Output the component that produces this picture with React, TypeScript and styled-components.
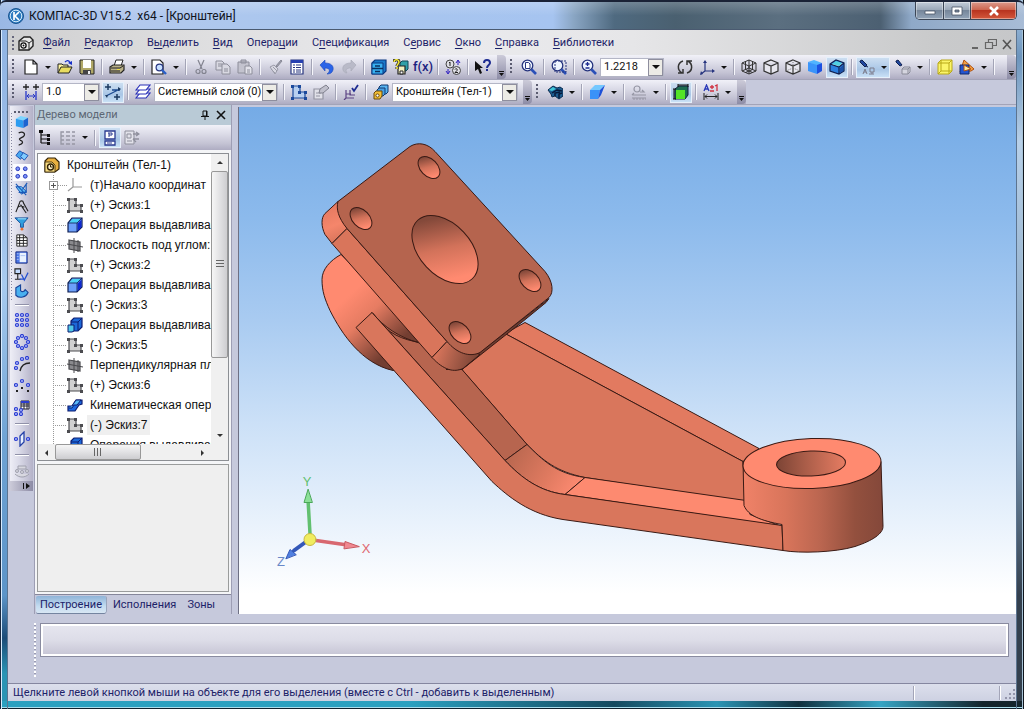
import React from "react";
import styled, { createGlobalStyle, css } from "styled-components";

const ui = `Roboto, "DejaVu Sans Condensed", "Liberation Sans", sans-serif`;
const treeFont = `"Liberation Sans", Arial, sans-serif`;
const navy = "#1c2268";
const base = "#c6c9dc";
const bar = "linear-gradient(#f1f1f8 0%, #dcdce8 35%, #c3c2d3 75%, #aeacc2 100%)";

const GlobalStyle = createGlobalStyle`
  * { box-sizing: border-box; }
  body { margin: 0; font-family: ${ui}; font-size: 11px; color: ${navy}; }
  button { font: inherit; color: inherit; border: 0; padding: 0; background: none; }
  ul { list-style: none; margin: 0; padding: 0; }
  svg { display: block; flex: none; }
`;

/* ---------- icons, all on a 16 by 16 grid ---------- */

const sketch = (c: string, f: string) => (
  <>
    <path d="M2 2h7v6h5v6H2Z" fill={f} stroke={c} strokeWidth="1.200" />
    <path d="M0 1h3v3H0ZM7 1h3v3H7ZM7 7h3v3H7ZM13 7h3v3h-3ZM0 13h3v3H0ZM13 13h3v3h-3Z" fill={c} />
  </>
);
const lens = (
  <>
    <circle cx="6.500" cy="6.500" r="5.300" fill="#eef5ff" stroke="#26347e" strokeWidth="1.300" />
    <path d="m10.500 10.500 4.500 4.500" stroke="#2a50b8" strokeWidth="2.600" />
  </>
);
const ring = (x: number, y: number) => (
  <circle key={`${x}-${y}`} cx={x} cy={y} r="1.500" fill="#b8c4ff" stroke="#2a3cd0" strokeWidth="1.200" />
);
const hexCube = "M8 1 15 4v8l-7 3-7-3V4ZM1 4l7 3 7-3M8 7v8";
const boxCube = "M1 5 7 1l8 3v8l-5 3-9-3ZM1 5l9 3 5-4M10 8v7";

const icons: Record<string, React.ReactNode> = {
  part: (
    <>
      <path d="M1 6 6 2h6l3 3v6l-4 4H1Z" fill="#e8e8e8" stroke="#222" strokeWidth="1.400" />
      <path d="M1 6h7l3 2v7M11 8l4-3" fill="none" stroke="#222" />
      <circle cx="5.500" cy="10.500" r="2.600" fill="#fff" stroke="#111" strokeWidth="1.300" />
      <circle cx="5.500" cy="10.500" r="1" fill="#111" />
    </>
  ),
  partGold: (
    <>
      <path d="M1 4 4 1h7l4 4v7l-4 3H1Z" fill="#e8b040" stroke="#332408" strokeWidth="1.200" />
      <path d="M1 5h7l3 3v7H1Z" fill="#f8dc80" stroke="#332408" strokeWidth=".800" />
      <circle cx="6.500" cy="10" r="3" fill="#fff3c8" stroke="#332408" strokeWidth="1.400" />
      <path d="M6.500 8v2h2" fill="none" stroke="#332408" />
    </>
  ),
  page: <path d="M2 1h8l4 4v10H2ZM10 1v4h4" fill="#fff" stroke="#222" strokeWidth="1.200" />,
  open: (
    <>
      <path d="M1 14V5h4l1 1h5v3" fill="#fff6a0" stroke="#222" />
      <path d="m1 14 3-6h11l-3 6Z" fill="#e8dc60" stroke="#222" />
      <path d="M8 3c2-2 4-2 5 1" fill="none" stroke="#1830c8" strokeWidth="1.300" />
      <path d="m11 4 4-2v4Z" fill="#1830c8" />
    </>
  ),
  save: (
    <>
      <path d="M1 1h14v14H2l-1-1Z" fill="#b0a868" stroke="#222" />
      <path d="M4 1h8v8H4Z" fill="#fff" />
      <path d="M4 11h8v4H4Z" fill="#444" />
      <path d="M9 12h2v3H9Z" fill="#eee" />
    </>
  ),
  print: (
    <>
      <path d="M5 7 7 1h7l-2 6Z" fill="#fff" stroke="#222" />
      <path d="m1 8 3-2h11v5l-3 3H1Z" fill="#b8b088" stroke="#222" strokeWidth="1.200" />
      <path d="M2 9h9l3-2M2 12h9" stroke="#222" fill="none" />
      <path d="M8 10h3v1H8Z" fill="#f0e040" />
    </>
  ),
  preview: (
    <>
      <path d="M1 1h8l3 3v11H1Z" fill="#fff" stroke="#222" strokeWidth="1.200" />
      <circle cx="8.500" cy="8.500" r="3.400" fill="#c8e0ff" stroke="#26347e" strokeWidth="1.200" />
      <path d="m11 11 4 4" stroke="#2a60c8" strokeWidth="2.400" />
    </>
  ),
  cut: (
    <g stroke="#82838f" strokeWidth="1.200" fill="none">
      <path d="m5 1 4 9M11 1 7 10" />
      <circle cx="5" cy="12.500" r="2" />
      <circle cx="11" cy="12.500" r="2" />
    </g>
  ),
  copy: (
    <g stroke="#8d8e9a" fill="#d9d9e2">
      <path d="M1 2h6l2 2v7H1ZM3 5h4M3 7h4" />
      <path d="M7 5h5l3 3v7H7ZM9 10h4M9 12h4" />
    </g>
  ),
  paste: (
    <g stroke="#8d8e9a" fill="#c3c3ce">
      <path d="M1 3h11v11H1ZM4 1h5v3H4Z" />
      <path d="M8 7h5l2 2v6H8ZM10 11h3M10 13h3" fill="#e2e2ea" />
    </g>
  ),
  brush: (
    <>
      <path d="m9 7 5-6 1 1-5 6Z" fill="#9c9dab" stroke="#8a8b98" />
      <path d="m3 8 4-2 4 4-3 5Z" fill="#d8d8e2" stroke="#9a9ba8" />
      <path d="m4 10 4 4M6 8l4 4" stroke="#9a9ba8" />
    </>
  ),
  props: (
    <>
      <path d="M2 1h12v14H2Z" fill="#fff" stroke="#26347e" strokeWidth="1.200" />
      <path d="M2 1h12v3H2Z" fill="#2640b0" />
      <path d="M4 6h2M4 8.500h2M4 11h2M4 13h2M7 6h5M7 8.500h5M7 11h5M7 13h5" stroke="#26347e" />
    </>
  ),
  undo: (
    <path d="M1 6 6 1v3c6 0 9 3 8 7-1 3-3 4-6 4 3-2 4-6-2-6v3Z" fill="#2a64e8" stroke="#1b48b8" strokeWidth=".600" />
  ),
  redo: (
    <path d="M15 6 10 1v3c-6 0-9 3-8 7 1 2 2 3 4 3-2-3-1-5 4-5v3Z" fill="#b9bac8" stroke="#a6a7b6" strokeWidth=".600" />
  ),
  cabinet: (
    <>
      <path d="m1 4 3-3h11v11l-3 3H1Z" fill="#1878c8" stroke="#0a3880" strokeWidth="1.200" />
      <path d="M1 4h11v11H1Z" fill="#38b0f0" stroke="#0a3880" />
      <path d="M1 9.500h11M4 7h5M4 12.500h5" stroke="#0a3060" strokeWidth="1.400" />
    </>
  ),
  variables: (
    <>
      <path d="m7 4 2-2h6v8l-2 2H7Z" fill="#30a0a8" stroke="#104858" />
      <path d="M5 7h7v8H5Z" fill="#f3f0c0" stroke="#222" strokeWidth="1.200" />
      <path d="M7 12h3v3H7Z" fill="#fff" stroke="#222" />
      <path d="M1 3c0-3 5-3 5 0 0 2-2 2-2 4M4 8v2" stroke="#222" strokeWidth="3" fill="none" />
      <path d="M1 3c0-3 5-3 5 0 0 2-2 2-2 4M4 8v2" stroke="#f4e838" strokeWidth="1.600" fill="none" />
    </>
  ),
  renumber: (
    <>
      <circle cx="5" cy="5" r="4" fill="#e0e0e6" stroke="#444" />
      <circle cx="11.500" cy="11.500" r="4" fill="#e0e0e6" stroke="#444" />
      <path d="m4 4 1-1v4M10 10.500c1-2 3 0 2 1l-2 2h3" stroke="#222" fill="none" />
      <path d="M13 6V2m-2 2 2-3 2 3M3 10v4m-2-2 2 3 2-3" stroke="#3020c0" fill="none" />
    </>
  ),
  help: (
    <>
      <path d="m0 2 8 7H5l2 5-2 1-2-5-3 2Z" fill="#111" />
      <path d="M9 4c0-4 6-4 6 0 0 2-3 2-3 5" stroke="#1c2a90" strokeWidth="2" fill="none" />
      <path d="M11 10h2v2h-2Z" fill="#1c2a90" />
    </>
  ),
  zoomPage: (
    <>
      {lens}
      <path d="M4.500 3.500h3l1.500 1.500v4.500H4.500Z" fill="#fff" stroke="#26347e" />
    </>
  ),
  zoomArea: (
    <>
      {lens}
      <path d="M4 2h11v11H4Z" fill="none" stroke="#26347e" strokeDasharray="2 1" />
    </>
  ),
  zoomStep: (
    <>
      {lens}
      <path d="M6.500 3v4M4.500 5h4M4.500 9h4" stroke="#1c2a90" strokeWidth="1.300" />
    </>
  ),
  rotate: (
    <g fill="none" stroke="#333" strokeWidth="1.500">
      <path d="M6 2C0 4 0 11 5 14M1 14h5v-4M10 14c6-2 6-9 1-12M15 2h-5v4" />
    </g>
  ),
  axes: (
    <>
      <path d="M6 12V3M6 12h8M6 12l-4 3" stroke="#26347e" strokeWidth="1.200" />
      <path d="m6 1 2 3H4ZM16 12l-3 2v-4ZM1 16l1-4 2 3Z" fill="#26347e" />
    </>
  ),
  wire: <path d={`${hexCube}M8 1v8l7 3M8 9l-7 3M4.500 2.500v8l7 3M11.500 2.500v8l-7 3`} fill="none" stroke="#333" />,
  hidden: <path d={hexCube} fill="#e6e6ee" stroke="#333" strokeWidth="1.200" />,
  thin: (
    <>
      <path d={hexCube} fill="#e6e6ee" stroke="#333" strokeWidth="1.200" />
      <path d="M8 1v8l7 3M8 9l-7 3" fill="none" stroke="#777" strokeDasharray="1 1" />
    </>
  ),
  shaded: (
    <>
      <path d="M1 3 7 1l8 3-5 3Z" fill="#50b4ff" />
      <path d="M1 3 10 6v9l-9-3Z" fill="#3a94fa" />
      <path d="m15 4-5 2v9l5-3Z" fill="#1c50e0" />
    </>
  ),
  shadedEdge: (
    <>
      <path d={boxCube} fill="#2c80e0" stroke="#102050" strokeWidth="1.200" />
      <path d="m3 5 4-3 6 2-3 3Z" fill="#50d0e0" />
      <path d="m11 9 3-3v6l-3 2Z" fill="#1c50a8" />
    </>
  ),
  camera: (
    <>
      <path d="m1 2 2-1 5 5-2 2-5-5Z" fill="#2048a0" stroke="#102050" />
      <path d="m7 7 2 1" stroke="#102050" />
      <path d="m4 15 2-5 2 5M5 13h2M11 9h4v4h-4ZM13 13v2M10 15h5" fill="none" stroke="#7c7d8c" />
    </>
  ),
  cameraBox: (
    <>
      <path d="m1 2 2-1 4 5-2 1-4-4Z" fill="#2048a0" stroke="#102050" />
      <path d="M7 10 9 8h6v5l-2 2H7ZM7 10h6v5M13 10l2-2" fill="#d5d5df" stroke="#8a8b98" />
    </>
  ),
  yellowCube: (
    <>
      <path d="m1 4 3-3h11v11l-3 3H1Z" fill="#fbf56a" stroke="#b8a818" />
      <path d="M1 4h11v11M12 4l3-3M4 1v11h11M4 12l-3 3" fill="none" stroke="#b8a818" />
    </>
  ),
  section: (
    <>
      <path d="M5 1 15 10 12 12 1 13Z" fill="#f4a040" stroke="#b05010" />
      <path d="M1 6h9v9H1Z" fill="#2454d0" stroke="#10286c" />
      <path d="M5 6 12 10l-7 2Z" fill="#fbe8a0" stroke="#b05010" />
    </>
  ),
  step: (
    <>
      <path d="M3 0v6M0 3h6M13 0v6M10 3h6" stroke="#222" strokeWidth="1.300" />
      <path d="M3 7v9M13 7v9" stroke="#2838c8" strokeWidth="1.300" />
      <path d="M4 12h8M6 10l-2 2 2 2M10 10l2 2-2 2" stroke="#2838c8" fill="none" />
    </>
  ),
  snap: (
    <>
      <path d="M3 0v6M0 3h6M12 10v6M9 13h6" stroke="#1c3a60" strokeWidth="1.500" />
      <path d="M1 12 15 5M7 6h8" stroke="#1c4a90" strokeWidth="1.300" />
      <path d="m0 11 3 0-1 3ZM13 3l3 2-3 2Z" fill="#1c3a60" />
    </>
  ),
  layers: (
    <g fill="#fff" stroke="#2a30b8" strokeWidth="1.200">
      <path d="m1 14 4-5h10l-4 5Z" />
      <path d="m1 10 4-5h10l-4 5Z" />
      <path d="m1 6 4-5h10l-4 5Z" />
    </g>
  ),
  sketchBlue: sketch("#1c4a9c", "#b8d0f0"),
  editGrey: (
    <>
      <path d="M1 5h9v10H1ZM3 9h5M3 12h4" fill="#e0e0e8" stroke="#9394a2" strokeWidth="1.200" />
      <path d="m6 9 1-4 6-4 3 3-6 5Z" fill="#c0c0cc" stroke="#80818e" />
    </>
  ),
  orient: (
    <>
      <path d="M3 6v8h8M3 14l-2 2M7 6v5h5M3 10h5" fill="none" stroke="#5c4484" strokeWidth="1.200" />
      <path d="M9 4l2 3 4-6" fill="none" stroke="#1c2a90" strokeWidth="1.800" />
    </>
  ),
  bodies: (
    <>
      <path d="M6 3 8 1h7v7l-2 2H6Z" fill="#58b4f0" stroke="#103870" />
      <path d="M4 6 6 4h6v6l-2 2H4Z" fill="#48a0e4" stroke="#103870" />
      <path d="M1 9 3 7h6v5l-2 3H1Z" fill="#f4c038" stroke="#6a4808" />
      <circle cx="4.500" cy="11.500" r="1.600" fill="#fff" stroke="#6a4808" />
    </>
  ),
  operation: (
    <>
      <path d="M1 6 6 2l4 2 3-1 3 2v7l-4 3-4-3-3 1-1-3Z" fill="#1c5c90" stroke="#0c2c50" />
      <path d="m2 6 4-3 3 2-4 2Z" fill="#40c8d8" />
      <path d="m5 9 5-3 5 1M8 12V9l5-1M12 14v-4l3-1" fill="none" stroke="#061838" strokeWidth="1.400" />
    </>
  ),
  surface: (
    <>
      <path d="M1 6 6 1h10l-5 5Z" fill="#74c8ff" />
      <path d="M1 6h10l-2 9H1Z" fill="#3a92f8" />
      <path d="m11 6 5-5-4 10-3 4Z" fill="#1c50d8" />
    </>
  ),
  check: (
    <g fill="none" stroke="#9596a4" strokeWidth="1.200">
      <circle cx="6" cy="5" r="3" />
      <path d="M9 8h4l-2-2M1 11h14M1 14h14M3 9l-2 2" />
      <path d="M2 15h13" strokeDasharray="2 1" />
    </g>
  ),
  simplify: (
    <>
      <path d="M2 5 6 2h9v9l-3 4H2Z" fill="#1c6c50" stroke="#101c40" />
      <path d="M3 6h9v9H3Z" fill="#54e428" />
      <path d="M5 1h10M1 5v10M5 0v3M15 0v3M0 5h3M0 15h3" stroke="#111" />
    </>
  ),
  dimension: (
    <>
      <path d="m1 7 2.500-6L6 7M2 5h3" fill="none" stroke="#2838b8" strokeWidth="1.300" />
      <path d="M7 3h4M9 1v4M7 7h4M12 2l2-1v6" fill="none" stroke="#d03040" strokeWidth="1.300" />
      <path d="M1 9v7M15 9v7M2 12.500h12M4 10.500l-2 2 2 2M12 10.500l2 2-2 2" fill="none" stroke="#222" />
    </>
  ),
  blueCube: (
    <>
      <path d="M2 5 7 2l8 2-5 3Z" fill="#7cd4ff" />
      <path d="m2 5 8 2v8l-8-2Z" fill="#2c9cf0" />
      <path d="m10 7 5-3v8l-5 3Z" fill="#1c64d0" />
    </>
  ),
  curve: <path d="M5 2c5-2 8 1 5 4-3 2-6 2-3 4 3 1 3 4-2 5" fill="none" stroke="#222" strokeWidth="1.300" />,
  planes: (
    <>
      <path d="m2 8 4-5 5 3-4 6Z" fill="#48a8f0" stroke="#1c50b0" />
      <path d="m7 9 3-4 5 3-4 5Z" fill="#80ccff" stroke="#1c50b0" />
    </>
  ),
  array: (
    <g fill="#7c94f8" stroke="#2030b8">
      <circle cx="4" cy="4" r="2" /><circle cx="12" cy="4" r="2" /><circle cx="4" cy="12" r="2" /><circle cx="12" cy="12" r="2" />
    </g>
  ),
  aux: (
    <>
      <path d="m2 5 6 0 5 5-5 3Z" fill="#60c0f8" stroke="#1c50b0" />
      <path d="m2 2 11 12M13 2v9H5M14 1l-5 7" fill="none" stroke="#1858b8" strokeWidth="1.200" />
    </>
  ),
  measure: <path d="M6 4a2 2 0 1 1 4 0l5 9M6 4 2 14M7 6l6 9M4 9c2-2 5-2 7 0" fill="none" stroke="#222" strokeWidth="1.200" />,
  filter: (
    <>
      <path d="M1 2h14l-5 6v4H7V8Z" fill="#30a0e0" stroke="#14509c" />
      <path d="M4 3h9" stroke="#b0e8ff" />
      <circle cx="8.500" cy="14" r="1.500" fill="#e87030" />
    </>
  ),
  spec: <path d="M3 2h7l4 3v9H3ZM3 5h11M3 8h11M3 11h11M6 2v12M10 2v12" fill="#fff" stroke="#222" />,
  report: (
    <>
      <path d="M2 2h12v12H2Z" fill="#4c78e8" stroke="#182c80" />
      <path d="M6 3h7v10H6Z" fill="#e8f2ff" />
      <path d="M7 6h5M3 4h2M3 7h2M3 10h2" stroke="#a8c0f4" />
    </>
  ),
  dims: (
    <>
      <path d="M1 2h6v5H1ZM4 7v6M1 13h6" fill="#c4dcff" stroke="#222" strokeWidth="1.200" />
      <path d="m8 8 3 6 4-8M6 13h4" fill="none" stroke="#2450d0" strokeWidth="1.300" />
    </>
  ),
  sheet: (
    <path d="m2 4 5-3v6c2 2 4 1 5-1l3 3c-2 5-9 7-13 3Z" fill="#48b0f0" stroke="#184498" strokeWidth="1.200" />
  ),
  grid9: <>{[3, 8, 13].flatMap((x) => [3, 8, 13].map((y) => ring(x, y)))}</>,
  circle8: <>{[[8, 2], [12, 4], [14, 8], [12, 12], [8, 14], [4, 12], [2, 8], [4, 4]].map(([x, y]) => ring(x, y))}</>,
  alongCurve: (
    <>
      {ring(2, 12)}{ring(3, 7)}{ring(8, 3)}{ring(13, 2)}
      <path d="M6 15c1-5 4-8 10-8" fill="none" stroke="#222" strokeWidth="1.400" />
    </>
  ),
  points: (
    <>
      {ring(8, 3)}{ring(2, 7)}{ring(14, 7)}
      <path d="M2 12h2v2H2ZM7 9h2v2H7ZM13 12h2v2h-2Z" fill="#222" />
    </>
  ),
  tableArray: (
    <>
      <path d="M7 1h8v8H7ZM7 4h8M7 6h8M10 1v8M13 1v8" fill="#fff" stroke="#223" />
      <path d="M7 1h8v2H7Z" fill="#2a3cd0" />
      {ring(2, 9)}{ring(7, 10)}{ring(2, 14)}{ring(7, 14)}
    </>
  ),
  mirror: (
    <>
      {ring(2, 8)}{ring(14, 8)}
      <path d="m6 5 4-4v10l-4 4Z" fill="#e8f0ff" stroke="#2440a8" strokeWidth="1.300" />
    </>
  ),
  arrayGrey: (
    <g fill="#d8d8e0" stroke="#a0a1ae">
      <circle cx="3" cy="9" r="1.500" /><circle cx="8" cy="10" r="1.500" /><circle cx="13" cy="9" r="1.500" />
      <path d="M1 12c4 4 10 4 14 0M4 4h8v3H4Z" />
    </g>
  ),
  treeIcon: (
    <>
      <path d="M3 1v12M3 5h6M3 9h6M3 13h6" fill="none" stroke="#111" strokeWidth="1.200" />
      <path d="M1 0h4v3H1ZM9 4h3v3H9ZM9 8h3v3H9ZM9 12h3v3H9Z" fill="#111" />
    </>
  ),
  structure: (
    <g fill="none" stroke="#9697a4" strokeWidth="1.300">
      <path d="M4 2H1v12h3M1 6h3M1 10h3" />
      <path d="M6 2h4M6 6h4M6 10h4M6 14h4M12 2h3M12 6h3M12 10h3M12 14h3" />
    </g>
  ),
  docs: (
    <>
      <path d="M3 1h10v8H3ZM3 11h10v4H3Z" fill="#fff" stroke="#2a3a90" strokeWidth="1.300" />
      <path d="M7 3v4M6 3h4v2H7M5 13h5" fill="none" stroke="#2a3a90" />
    </>
  ),
  relations: (
    <>
      <path d="M1 1h9v13H1ZM3 4h4v4H3ZM3 11h5" fill="#e2e2ea" stroke="#8e8f9c" />
      <path d="M9 4h6M12 2l3 2-3 2M9 9h6M12 12l-3-3" fill="none" stroke="#8e8f9c" strokeWidth="1.300" />
    </>
  ),
  origin: <path d="M6 1v9h9M6 10l-5 4" fill="none" stroke="#999" strokeWidth="1.200" />,
  sketchGrey: sketch("#4c4c50", "#d0d0d0"),
  extrude: (
    <>
      <path d="m5 1-4 5v9h9l5-5V1Z" fill="#6ca0fa" stroke="#0c1c50" strokeWidth="1.200" />
      <path d="M2 6 5.500 2H14l-4 4Z" fill="#48d0f4" />
      <path d="m10.500 6.500 4-4v7.500l-4 4.500Z" fill="#1028d0" />
      <path d="M1 6h9v9M10 6l5-5" fill="none" stroke="#0c1c50" strokeWidth=".800" />
    </>
  ),
  extrudeB: (
    <>
      <path d="m4 4 3-3h8v9l-4 4H4Z" fill="#1c68d8" stroke="#0c1c70" strokeWidth="1.200" />
      <path d="M4 5h7v8M11 5l4-4" fill="none" stroke="#0c1c70" />
      <path d="M1 8h6v6l-2 1H1Z" fill="#50c8e8" stroke="#0c1c70" />
    </>
  ),
  plane: (
    <>
      <path d="m2 3 11 2v9L2 12Z" fill="#8a8a8e" stroke="#48484c" strokeWidth="1.200" />
      <path d="M7 1v15M0 7l16 3M11 3v12" stroke="#48484c" />
    </>
  ),
  sweep: (
    <>
      <path d="M1 9h4l4-6h6v4l-3 1-4 6H1Z" fill="#1c68e0" stroke="#0c1c70" strokeWidth="1.200" />
      <path d="m5 9 4-6h5l-4 5H7l-2 3H2" fill="#58b8f8" stroke="#0c1c70" />
    </>
  ),
};

const Icon = ({ name }: { name: string }) => (
  <svg width="16" height="16" viewBox="0 0 16 16" aria-hidden="true">{icons[name]}</svg>
);

/* ---------- window frame ---------- */

const Frame = styled.div`
  height: 100vh;
  min-height: 560px;
  display: flex;
  flex-direction: column;
  padding: 0 8px 8px;
  overflow: hidden;
  background:
    linear-gradient(90deg, #1b2a40 0 1px, #d9ecff 1px 2px, transparent 2px 7px, #5c7490 7px) left / 8px 100% no-repeat,
    linear-gradient(90deg, #5c7490 0 1px, transparent 1px 6px, #a8c4d8 6px 7px, #10151c 7px) right / 8px 100% no-repeat,
    linear-gradient(transparent 6px, #a8dcec 6px 7px, #10202c 7px) bottom / 100% 8px no-repeat,
    linear-gradient(90deg, #2aa0c0 0 40%, #154a60 60%, #2a94b4 70%, #10303e 78%, #36a4c4 86%, #14242c 96%) bottom / 100% 8px no-repeat,
    linear-gradient(#8db2e2 0, #9fc0ea 30%, #a8cbf0 40%, #6fa3d4 62%, #5c94c8 84%, #1c4c78 90%, #2a94b4 95%) left / 8px 100% no-repeat,
    linear-gradient(#b0cbe8 0, #6c94bc 8%, #b8d0e8 20%, #7c9cba 60%, #34404e 84%) right / 8px 100% no-repeat;
`;

const TitleBar = styled.header`
  display: flex;
  align-items: center;
  height: 30px;
  flex: none;
  margin: 0 -8px;
  padding: 0 8px;
  border-top: 2px solid #1a2236;
  border-bottom: 1px solid #4a5a70;
  border-radius: 6px 6px 0 0;
  background:
    linear-gradient(rgba(255, 255, 255, 0.2), transparent 50%),
    linear-gradient(90deg, #9ab8e4 0, #b3c9ee 12%, #a9c6ee 30%, #a6c4f0 54%, #8aa6c4 56%, #4f6a80 60%, #4a6070 66%, #5b6f80 76%, #4c6072 86%, #8fa9c8 89%, #a8bcd6 100%);
`;

const Title = styled.h1`
  flex: 1;
  margin: 0 0 0 5px;
  font: 400 12px/16px ${ui};
  color: #10141c;
  white-space: pre;
`;

const CaptionButtons = styled.div`
  display: flex;
  align-self: flex-start;
  border: 1px solid #3c4656;
  border-top: 0;
  border-radius: 0 0 5px 5px;
  overflow: hidden;
  margin-right: -1px;
`;

const CaptionButton = styled.button<{ $close?: boolean }>`
  display: flex;
  align-items: center;
  justify-content: center;
  width: ${(p) => (p.$close ? 46 : 27)}px;
  height: 17px;
  box-shadow: inset 0 0 0 1px rgba(255, 255, 255, 0.4);
  background: ${(p) =>
    p.$close
      ? "linear-gradient(#dc9a8c 0, #cc6650 45%, #b83420 50%, #d4583c 100%)"
      : "linear-gradient(#c3ccd8 0, #9ba8b8 45%, #76869a 50%, #93a4b8 100%)"};
  & + & { border-left: 1px solid #3c4656; }
`;

const MenuBar = styled.nav`
  display: flex;
  align-items: center;
  height: 25px;
  flex: none;
  padding: 0 3px 0 4px;
  background: linear-gradient(90deg, #cfcfd0 0, #dcdcdd 15%, #ebebee 42%, #e6e6e8 62%, #c9cacb 92%, #c6c7c9 100%);
`;

const MenuList = styled.div`
  display: flex;
  gap: 14px;
  margin-left: 9px;
`;

const MenuItem = styled.button`
  line-height: 16px;
  white-space: nowrap;
  u { text-underline-offset: 2px; }
`;

const DocButtons = styled.div`
  display: flex;
  gap: 3px;
  margin-left: auto;
  padding-top: 4px;
  button { width: 13px; height: 13px; }
`;

/* ---------- tool bars ---------- */

const ToolRow = styled.div`
  display: flex;
  height: 25px;
  flex: none;
  background: ${base};
  border-bottom: 1px solid #a3a4b8;
`;

const ToolBar = styled.div<{ $grow?: boolean }>`
  display: flex;
  align-items: center;
  flex: ${(p) => (p.$grow ? "1 1 auto" : "none")};
  background: ${bar};
`;

const Grip = styled.span<{ $row?: boolean }>`
  flex: none;
  width: ${(p) => (p.$row ? "16px" : "12px")};
  height: ${(p) => (p.$row ? "2px" : "16px")};
  background: ${(p) =>
    p.$row
      ? "repeating-linear-gradient(90deg, #5b5c70 0 2px, transparent 2px 4px)"
      : "repeating-linear-gradient(#5b5c70 0 2px, transparent 2px 4px) 4px 0 / 2px 100% no-repeat"};
`;

const litBox = css`
  background: linear-gradient(#cfe0f2, #a9c6e6 60%, #cde4f8);
  box-shadow: inset 0 0 0 1px #e6f0fa;
`;

const Tool = styled.button<{ $on?: boolean }>`
  display: flex;
  align-items: center;
  justify-content: center;
  flex: none;
  width: 22px;
  height: 21px;
  ${(p) => p.$on && litBox}
`;

const Lit = styled.span`
  display: flex;
  align-items: center;
  height: 21px;
  margin-right: 2px;
  ${litBox}
`;

const CaretButton = styled.button`
  display: flex;
  align-items: center;
  justify-content: center;
  flex: none;
  width: 12px;
  height: 21px;
  &::after {
    content: "";
    border: 3px solid transparent;
    border-top-color: #111;
    border-bottom: 0;
  }
`;

const Rule = styled.span`
  flex: none;
  width: 8px;
  height: 16px;
  background: linear-gradient(90deg, #a3a4b6 0 1px, #f6f6fb 1px 2px) 3px 0 / 2px 100% no-repeat;
`;

const Gap = styled.span`
  flex: none;
  width: 8px;
`;

const Overflow = styled.button<{ $end?: boolean }>`
  display: flex;
  align-items: flex-end;
  justify-content: center;
  flex: none;
  align-self: stretch;
  width: 9px;
  margin-left: ${(p) => (p.$end ? "auto" : "3px")};
  padding-bottom: 3px;
  border-radius: 0 4px 4px 0;
  background: linear-gradient(#cccbd9, #8d8ca6);
`;

const OverflowMark = () => (
  <svg width="5" height="5" viewBox="0 0 5 5" aria-hidden="true">
    <path d="M0 0h5v1H0ZM0 2h5L2.500 5Z" fill="#111" />
  </svg>
);

const FxLabel = styled.span`
  font: 500 13px/14px ${ui};
  color: #1c2280;
`;

const ComboShell = styled.span<{ $w: number }>`
  display: flex;
  flex: none;
  width: ${(p) => p.$w}px;
  height: 19px;
  margin-right: 2px;
  border: 1px solid #b4b6c6;
  background: #fff;
  select {
    flex: 1;
    min-width: 0;
    appearance: none;
    border: 0;
    padding: 0 0 0 3px;
    background: #fff;
    color: #111;
    font: 11px/16px ${ui};
  }
`;

const ArrowBox = styled.span`
  display: flex;
  align-items: center;
  justify-content: center;
  width: 15px;
  border: 1px solid #8e8e9e;
  background: #ecebe6;
  pointer-events: none;
  &::after {
    content: "";
    border: 4px solid transparent;
    border-top-color: #111;
    border-bottom: 0;
  }
`;

const Combo = ({ label, value, width }: { label: string; value: string; width: number }) => (
  <ComboShell $w={width}>
    <select aria-label={label}><option>{value}</option></select>
    <ArrowBox />
  </ComboShell>
);

type Entry = string | [string, string];
/* "|" is a rule, "v" a drop-down arrow, "name*" a pressed button */
const Tools = ({ items }: { items: Entry[] }) => (
  <>
    {items.map((item, i) => {
      if (item === "|") return <Rule key={i} />;
      if (item === "v") return <CaretButton key={i} aria-label="Другие варианты" />;
      const [name, label] = item as [string, string];
      const on = name.endsWith("*");
      return (
        <Tool key={i} $on={on} aria-label={label} aria-pressed={on || undefined}>
          {name === "fx" ? <FxLabel>f(x)</FxLabel> : <Icon name={name.replace("*", "")} />}
        </Tool>
      );
    })}
  </>
);

/* ---------- workspace ---------- */

const Workspace = styled.main`
  display: grid;
  grid-template-columns: 26px 198px minmax(0, 1fr);
  flex: 1;
  min-height: 0;
  background: ${base};
`;

const SideBar = styled.div`
  display: flex;
  flex-direction: column;
  align-items: center;
  align-self: start;
  margin: 1px 1px 0 2px;
  padding-top: 5px;
  background: linear-gradient(90deg, #eeeef6 0, #dadae8 40%, #b4b2c8 100%);
  border-radius: 0 0 4px 4px;
`;

const SideTool = styled.button<{ $tall?: boolean; $on?: boolean }>`
  display: flex;
  align-items: center;
  justify-content: center;
  width: 18px;
  height: ${(p) => (p.$tall ? 22 : 17)}px;
  background: ${(p) => (p.$on ? "#fbfcff" : "none")};
  svg { width: ${(p) => (p.$tall ? 16 : 15)}px; height: ${(p) => (p.$tall ? 16 : 15)}px; }
`;

const SideSet = styled.div<{ $dots?: boolean }>`
  align-self: stretch;
  display: flex;
  flex-direction: column;
  align-items: center;
  background: ${(p) =>
    p.$dots ? "repeating-linear-gradient(#8485a0 0 1px, transparent 1px 3px) 1px 0 / 1px 100% no-repeat" : "none"};
`;

const SideRule = styled.span`
  width: 14px;
  height: 9px;
  background: linear-gradient(#9091a8 0 1px, #fff 1px 2px) 0 4px / 100% 2px no-repeat;
`;

const SideMore = styled.button`
  align-self: stretch;
  height: 10px;
  padding-right: 3px;
  display: flex;
  align-items: center;
  justify-content: flex-end;
  background: linear-gradient(90deg, #cccbd9, #8d8ca6);
`;

const Panel = styled.section`
  display: flex;
  flex-direction: column;
  min-height: 0;
  border-left: 1px solid #9d9eb4;
  border-right: 1px solid #9d9eb4;
`;

const PanelHead = styled.header`
  display: flex;
  align-items: center;
  height: 20px;
  flex: none;
  padding: 0 2px;
  background: #b9cad6;
  color: #5c6674;
  h2 { flex: 1; margin: 0; font: 400 11px/16px ${ui}; }
  button { width: 16px; height: 14px; display: flex; align-items: center; justify-content: center; }
`;

const PanelTools = styled.div`
  display: flex;
  align-items: center;
  height: 25px;
  flex: none;
  background: ${bar};
`;

const PanelBody = styled.div`
  display: flex;
  flex-direction: column;
  gap: 3px;
  flex: 1;
  min-height: 0;
  padding: 3px 2px 2px;
  background: #f4f5f7;
  border-bottom: 1px solid #85869a;
`;

const TreeBox = styled.div`
  display: grid;
  grid-template: minmax(0, 1fr) 16px / minmax(0, 1fr) 17px;
  flex: 17;
  min-height: 0;
  border: 1px solid #8c8f94;
  background: #fff;
`;

const LowerBox = styled.div`
  flex: 7;
  min-height: 0;
  border: 1px solid #9a9c9c;
  background: #efefef;
`;

const Tree = styled.ul`
  && { padding: 1px 0 0 6px; }
  overflow: hidden;
  font: 12px/20px ${treeFont};
  color: #111;
  white-space: nowrap;
`;

const RootRow = styled.li`
  display: flex;
  align-items: center;
  gap: 7px;
  height: 20px;
`;

const Branch = styled.li<{ $selected?: boolean; $expandable?: boolean }>`
  display: flex;
  align-items: center;
  height: 20px;
  margin-left: 9px;
  background: repeating-linear-gradient(#999 0 1px, transparent 1px 2px) left / 1px 100% no-repeat;
  &::before {
    content: "";
    flex: none;
    width: ${(p) => (p.$expandable ? 9 : 14)}px;
    height: 1px;
    background: repeating-linear-gradient(90deg, #999 0 1px, transparent 1px 2px);
  }
  span {
    margin-left: 4px;
    padding: 0 3px;
    background: ${(p) => (p.$selected ? "#efefef" : "none")};
  }
`;

const Expander = styled.button`
  && {
    order: -1;
    flex: none;
    width: 9px;
    height: 9px;
    margin-left: -4px;
    border: 1px solid #999;
    background:
      linear-gradient(#555, #555) center / 5px 1px no-repeat,
      linear-gradient(#555, #555) center / 1px 5px no-repeat,
      #fff;
  }
`;

const ScrollV = styled.div`
  display: flex;
  flex-direction: column;
  align-items: stretch;
  background: #f0f0f0;
`;

const ScrollH = styled.div`
  grid-column: 1 / 3;
  display: flex;
  background: #f0f0f0;
  padding-right: 17px;
`;

const ScrollArrow = styled.button<{ $dir: "up" | "down" | "left" | "right" }>`
  display: flex;
  align-items: center;
  justify-content: center;
  flex: none;
  width: 17px;
  height: 17px;
  &::after {
    content: "";
    border: 3px solid transparent;
    ${(p) => p.$dir === "up" && "border-bottom-color: #333; border-top: 0;"}
    ${(p) => p.$dir === "down" && "border-top-color: #333; border-bottom: 0;"}
    ${(p) => p.$dir === "left" && "border-right-color: #333; border-left: 0;"}
    ${(p) => p.$dir === "right" && "border-left-color: #333; border-right: 0;"}
  }
`;

const Track = styled.div<{ $column?: boolean }>`
  display: flex;
  flex-direction: ${(p) => (p.$column ? "column" : "row")};
  flex: 1;
  min-height: 0;
`;

const Thumb = styled.div<{ $column?: boolean; $share: number }>`
  display: flex;
  align-items: center;
  justify-content: center;
  flex: 0 0 ${(p) => p.$share}%;
  border: 1px solid #989898;
  border-radius: 2px;
  background: linear-gradient(${(p) => (p.$column ? "90deg" : "180deg")}, #f6f6f6, #e2e2e4 50%, #cdcdd0);
  &::after {
    content: "";
    width: 8px;
    height: 8px;
    background: repeating-linear-gradient(${(p) => (p.$column ? "180deg" : "90deg")}, #666 0 1px, transparent 1px 3px);
  }
`;

const Tabs = styled.div`
  display: flex;
  align-items: center;
  height: 19px;
  flex: none;
  padding-left: 1px;
`;

const Tab = styled.button<{ $on?: boolean }>`
  height: 17px;
  padding: 0 4px;
  margin-right: 3px;
  line-height: 15px;
  border-radius: 2px;
  ${(p) =>
    p.$on &&
    css`
      background: linear-gradient(#8fb4d8, #c4dcf0 60%, #d8e6f4);
      box-shadow: 0 1px 0 #7484a0, 1px 0 0 #9aa6bc;
    `}
`;

const ViewPort = styled.section`
  margin: 2px 0 0 6px;
  min-height: 0;
  border-left: 1px solid #6e7084;
  background: linear-gradient(#75abe6 0, #8cbaec 22%, #a9cbf1 42%, #cbe0f7 62%, #e9f2fc 82%, #ffffff 96%);
  svg { width: 100%; height: 100%; }
`;

const PropertyArea = styled.div`
  display: flex;
  height: 69px;
  flex: none;
  padding: 9px 7px 6px 24px;
  background: ${base};
  gap: 4px;
`;

const PropertyGrip = styled.span`
  width: 4px;
  background: repeating-linear-gradient(#fff 0 2px, #9a9bb2 2px 3px, transparent 3px 4px) 2px 0 / 2px 100% no-repeat;
`;

const PropertyBox = styled.div`
  flex: 1;
  height: 34px;
  border: 1px solid #898ba0;
  box-shadow: inset 0 0 0 2px #fff;
  background: linear-gradient(#e6e6f0, #dddde8 50%, #c5c4d4);
`;

const StatusBar = styled.footer`
  display: flex;
  align-items: center;
  height: 18px;
  flex: none;
  padding-left: 5px;
  border-top: 1px solid #8587a0;
  background: linear-gradient(#dcdfec, #cdd1e2);
  p { flex: 1; margin: 0; line-height: 16px; white-space: nowrap; }
`;

const StatusCell = styled.span<{ $w: number }>`
  display: flex;
  align-items: flex-end;
  justify-content: flex-end;
  width: ${(p) => p.$w}px;
  height: 14px;
  border-left: 1px solid #a3a5b8;
  box-shadow: inset 1px 0 0 #fff;
`;

/* ---------- 3D model ---------- */

const ink = "#3a1a14";
const smallHoles: [number, number][] = [[429, 168], [361, 219], [530, 281], [460, 333]];

const Model = () => (
  <svg viewBox="239 108 777 506" preserveAspectRatio="xMidYMid meet" role="img" aria-label="Кронштейн">
    <defs>
      <linearGradient id="tube" gradientUnits="userSpaceOnUse" x1="350" y1="295" x2="396" y2="345">
        <stop offset="0" stopColor="#ff8a70" /><stop offset=".4" stopColor="#e67c62" /><stop offset="1" stopColor="#733e31" />
      </linearGradient>
      <linearGradient id="cornerL" gradientUnits="userSpaceOnUse" x1="328" y1="212" x2="340" y2="240">
        <stop offset="0" stopColor="#e87c63" /><stop offset=".5" stopColor="#f5866b" /><stop offset="1" stopColor="#da765c" />
      </linearGradient>
      <linearGradient id="cornerB" gradientUnits="userSpaceOnUse" x1="436" y1="352" x2="474" y2="366">
        <stop offset="0" stopColor="#d9755b" /><stop offset=".5" stopColor="#a85d49" /><stop offset="1" stopColor="#7c4435" />
      </linearGradient>
      <linearGradient id="bore" x1=".1" y1=".3" x2=".9" y2=".6">
        <stop offset="0" stopColor="#84493a" /><stop offset=".5" stopColor="#d2725a" /><stop offset="1" stopColor="#ff8a70" />
      </linearGradient>
      <linearGradient id="bend" gradientUnits="userSpaceOnUse" x1="515" y1="450" x2="575" y2="488">
        <stop offset="0" stopColor="#bb6850" /><stop offset=".6" stopColor="#e07a60" /><stop offset="1" stopColor="#fb8970" />
      </linearGradient>
      <linearGradient id="boss" gradientUnits="userSpaceOnUse" x1="743" y1="0" x2="883" y2="0">
        <stop offset="0" stopColor="#f08268" /><stop offset=".3" stopColor="#d9755b" /><stop offset=".55" stopColor="#bb6650" />
        <stop offset=".8" stopColor="#93503e" /><stop offset="1" stopColor="#84483a" />
      </linearGradient>
      <linearGradient id="eye" x1="0" y1="0" x2="1" y2="0">
        <stop offset="0" stopColor="#7c4435" /><stop offset=".4" stopColor="#a85c48" /><stop offset="1" stopColor="#e67c62" />
      </linearGradient>
    </defs>
    <g stroke={ink} strokeWidth="1" strokeLinejoin="round">
      <path d="M341 255C330 261 322 270 322 280C322 292 325 300 330 311C342 335 362 364 393 371L440 372L430 340Z" fill="url(#tube)" />
      <path d="M525 323 759 449 743 462 505 334Z" fill="#e27a60" />
      <path d="M462 370 505 334 743 462 746 503 585 478C556 472 543 461 527 445L440 345Z" fill="#d9765c" />
      <path d="M372 313C384 328 400 338 418 343L450 356 462 370 527 445 505 461Z" fill="#b7654f" />
      <path d="M378 320C388 334 402 340 420 343" fill="none" />
      <path d="M527 445C543 461 556 474 585 478L565 495C540 492 522 479 505 461Z" fill="url(#bend)" />
      <path d="M585 478 746 501 750 515 782 527 565 495Z" fill="#fd8a70" />
      <path d="M372 313 505 461C522 479 540 492 565 495L782 526 783 551 563 520C530 515 508 497 492 482L356 328Z" fill="#d9765c" />
      <path d="M743 462 744 506C748 516 760 521 782 525L783 551C800 554 835 553 855 547C873 541 883 534 883 527L881 462Z" fill="url(#boss)" />
      <ellipse cx="812" cy="464" rx="69" ry="25" transform="rotate(-2 812 464)" fill="#ff8a70" />
      <ellipse cx="811" cy="464" rx="34.500" ry="12.500" transform="rotate(-2 811 464)" fill="url(#eye)" />
      <path d="M477 355 549 299 546 303 524 321 462 370 446 370Z" fill="#6e3c30" />
      <path d="M338 202 325 214C321 218 321 227 325 235L332 244 347 229Z" fill="url(#cornerL)" />
      <path d="M347 229 447 342 432 358 332 244Z" fill="#d9755b" />
      <path d="M447 342 432 358C444 371 454 373 463 369L480 355Z" fill="url(#cornerB)" />
      <path d="M410 147C418 142 428 144 435 152L545 272C553 282 554 293 549 298L480 353C470 358 457 354 447 342L347 229C338 218 336 209 338 202Z" fill="#b5644e" />
      <ellipse cx="445" cy="250" rx="40" ry="25.500" transform="rotate(47 445 250)" fill="url(#bore)" />
      {smallHoles.map(([x, y]) => (
        <ellipse key={x} cx={x} cy={y} rx="13" ry="8.500" transform={`rotate(46 ${x} ${y})`} fill="url(#bore)" />
      ))}
    </g>
    <g strokeLinecap="round">
      <path d="M310 534 308 500" stroke="#62c070" strokeWidth="3.500" />
      <path d="m308 490-4 13h8Z" fill="#8ce098" stroke="#4aa858" />
      <path d="m316 541 28 4" stroke="#d86870" strokeWidth="3.500" />
      <path d="m359 547-14-5-1 7Z" fill="#f08890" stroke="#c85860" />
      <path d="m305 543-11 8" stroke="#3458b8" strokeWidth="4" />
      <path d="m286 559 4-9 6 5Z" fill="#5080e0" stroke="#3458b8" />
      <circle cx="310" cy="540" r="6" fill="#f0ec60" stroke="#c8b840" />
      <g fontFamily="Liberation Sans, sans-serif" fontSize="13" textAnchor="middle">
        <text x="307" y="486" fill="#62c070">Y</text>
        <text x="366" y="553" fill="#e06870">X</text>
        <text x="281" y="566" fill="#6888c8">Z</text>
      </g>
    </g>
  </svg>
);

/* ---------- data ---------- */

const menu: [string, string, string][] = [
  ["", "Ф", "айл"], ["", "Р", "едактор"], ["В", "ы", "делить"], ["", "В", "ид"], ["Опера", "ц", "ии"],
  ["С", "п", "ецификация"], ["С", "е", "рвис"], ["", "О", "кно"], ["", "С", "правка"], ["", "Б", "иблиотеки"],
];

const tree: [string, string][] = [
  ["sketchGrey", "(+) Эскиз:1"],
  ["extrude", "Операция выдавливан"],
  ["plane", "Плоскость под углом:"],
  ["sketchGrey", "(+) Эскиз:2"],
  ["extrude", "Операция выдавливан"],
  ["sketchGrey", "(-) Эскиз:3"],
  ["extrudeB", "Операция выдавливан"],
  ["sketchGrey", "(-) Эскиз:5"],
  ["plane", "Перпендикулярная пл"],
  ["sketchGrey", "(+) Эскиз:6"],
  ["sweep", "Кинематическая опер"],
  ["sketchGrey", "(-) Эскиз:7"],
  ["extrudeB", "Операция выдавливан"],
];

const sideA: [string, string][] = [
  ["blueCube", "Редактирование детали"], ["curve", "Пространственные кривые"], ["planes", "Поверхности"],
  ["array", "Массивы"], ["aux", "Вспомогательная геометрия"], ["measure", "Измерения"], ["filter", "Фильтры"],
  ["spec", "Спецификация"], ["report", "Отчеты"], ["dims", "Элементы оформления"], ["sheet", "Листовое тело"],
];
const sideB: [string, string][] = [
  ["grid9", "Массив по сетке"], ["circle8", "Массив по окружности"], ["alongCurve", "Массив вдоль кривой"],
  ["points", "Массив по точкам"], ["tableArray", "Массив по таблице"],
];

export default function App() {
  return (
    <Frame>
      <GlobalStyle />
      <TitleBar>
        <svg width="16" height="16" viewBox="0 0 16 16" aria-hidden="true">
          <circle cx="8" cy="8" r="7.500" fill="#2e7cc0" stroke="#1a5490" />
          <circle cx="8" cy="8" r="5.800" fill="none" stroke="#d8ecfa" />
          <path d="M6 4v8M11 4 7 8l4 4" fill="none" stroke="#fff" strokeWidth="1.700" />
        </svg>
        <Title>КОМПАС-3D V15.2  x64 - [Кронштейн]</Title>
        <CaptionButtons>
          <CaptionButton aria-label="Свернуть">
            <svg width="12" height="10" viewBox="0 0 12 10"><path d="M1 5h10v3H1Z" fill="#fff" stroke="#4a5464" strokeWidth=".800" /></svg>
          </CaptionButton>
          <CaptionButton aria-label="Развернуть">
            <svg width="12" height="10" viewBox="0 0 12 10"><path d="M1 1h10v8H1ZM4 4h4v2H4Z" fill="#fff" fillRule="evenodd" stroke="#4a5464" strokeWidth=".800" /></svg>
          </CaptionButton>
          <CaptionButton $close aria-label="Закрыть">
            <svg width="12" height="10" viewBox="0 0 12 10"><path d="m2 1 8 8M10 1 2 9" stroke="#fff" strokeWidth="2.600" /></svg>
          </CaptionButton>
        </CaptionButtons>
      </TitleBar>

      <MenuBar aria-label="Главное меню">
        <svg width="6" height="16" aria-hidden="true"><path d="M1 1v14" stroke="#66677c" strokeWidth="2" strokeDasharray="2 2" /></svg>
        <Icon name="part" />
        <MenuList>
          {menu.map(([a, key, b]) => (
            <MenuItem key={a + key + b}>{a}<u>{key}</u>{b}</MenuItem>
          ))}
        </MenuList>
        <DocButtons>
          <button aria-label="Свернуть документ"><svg width="13" height="13"><path d="M4 10h6" stroke="#666" strokeWidth="2" /></svg></button>
          <button aria-label="Восстановить документ"><svg width="13" height="13"><path d="M4.500 4V1.500h8v6H9M1.500 4.500h7v6h-7Z" fill="none" stroke="#666" strokeWidth="1.200" /></svg></button>
          <button aria-label="Закрыть документ"><svg width="13" height="13"><path d="m3 2 8 9M11 2 3 11" stroke="#555" strokeWidth="1.600" /></svg></button>
        </DocButtons>
      </MenuBar>

      <ToolRow>
        <ToolBar role="toolbar" aria-label="Стандартная">
          <Grip />
          <Tools items={[["page", "Создать"], "v", ["open", "Открыть"], ["save", "Сохранить"], "|", ["print", "Печать"], "v", "|",
            ["preview", "Просмотр"], "v", "|", ["cut", "Вырезать"], ["copy", "Копировать"], ["paste", "Вставить"], "|",
            ["brush", "Копировать свойства"], ["props", "Свойства"], "|", ["undo", "Отменить"], ["redo", "Повторить"], "|",
            ["cabinet", "Менеджер библиотек"], ["variables", "Переменные"], ["fx", "Функции"], "|",
            ["renumber", "Перенумеровать"], "|", ["help", "Справка"]]} />
          <Overflow aria-label="Параметры панели"><OverflowMark /></Overflow>
        </ToolBar>
        <ToolBar $grow role="toolbar" aria-label="Вид">
          <Grip />
          <Tools items={[["zoomPage", "Показать все"], "|", ["zoomArea", "Увеличить рамкой"], "|", ["zoomStep", "Масштаб"]]} />
          <Combo label="Масштаб" value="1.2218" width={64} />
          <Gap />
          <Tools items={[["rotate", "Повернуть"], ["axes", "Ориентация"], "v", "|", ["wire", "Каркас"], ["hidden", "Без невидимых линий"],
            ["thin", "Тонкие невидимые линии"], ["shaded", "Полутоновое"], ["shadedEdge*", "Полутоновое с каркасом"], "|"]} />
          <Lit><Tools items={[["camera", "Скрыть все объекты"], "v"]} /></Lit>
          <Tools items={[["cameraBox", "Скрыть в компонентах"], "v", "|", ["yellowCube", "Перспектива"], ["section", "Сечение"], "v", "|"]} />
          <Overflow $end aria-label="Параметры панели"><OverflowMark /></Overflow>
        </ToolBar>
      </ToolRow>

      <ToolRow>
        <ToolBar role="toolbar" aria-label="Текущее состояние">
          <Grip />
          <Tools items={[["step", "Шаг курсора"]]} />
          <Combo label="Шаг курсора" value="1.0" width={58} />
          <Tools items={[["snap*", "Привязки"], "|", ["layers", "Слои"]]} />
          <Combo label="Слой" value="Системный слой (0)" width={124} />
          <Tools items={["|", ["sketchBlue", "Эскиз"], ["editGrey", "Редактировать"], "|", ["orient", "Перестроить"], "|", ["bodies", "Тела"]]} />
          <Combo label="Тело" value="Кронштейн (Тел-1)" width={126} />
          <Overflow aria-label="Параметры панели"><OverflowMark /></Overflow>
        </ToolBar>
        <ToolBar role="toolbar" aria-label="Операции">
          <Grip />
          <Tools items={[["operation", "Операция"], "v", "|", ["surface", "Поверхность"], "v", "|", ["check", "Проверка"], "v", "|",
            ["simplify*", "Упрощенный вид"], "|", ["dimension", "Размеры"], "v"]} />
          <Overflow aria-label="Параметры панели"><OverflowMark /></Overflow>
        </ToolBar>
      </ToolRow>

      <Workspace>
        <SideBar role="toolbar" aria-label="Компактная панель" aria-orientation="vertical">
          <Grip $row />
          <SideSet $dots>
            {sideA.map(([n, label]) => <SideTool key={n} $on={n === "array"} aria-label={label}><Icon name={n} /></SideTool>)}
          </SideSet>
          <SideRule />
          <SideSet>
            {sideB.map(([n, label]) => <SideTool key={n} $tall aria-label={label}><Icon name={n} /></SideTool>)}
          </SideSet>
          <SideRule />
          <SideTool $tall aria-label="Зеркальный массив"><Icon name="mirror" /></SideTool>
          <SideRule />
          <SideTool $tall aria-label="Изменить массив"><Icon name="arrayGrey" /></SideTool>
          <SideMore aria-label="Еще">
            <svg width="7" height="6" viewBox="0 0 7 6"><path d="M0 0h1v6H0ZM3 0v6l4-3Z" fill="#111" /></svg>
          </SideMore>
        </SideBar>

        <Panel>
          <PanelHead>
            <h2>Дерево модели</h2>
            <button aria-label="Закрепить"><svg width="10" height="10"><path d="M3 1h4v5H3ZM1 6.500h8M5 7v3M6.500 1v5" fill="none" stroke="#111" /></svg></button>
            <button aria-label="Закрыть панель"><svg width="10" height="10"><path d="m1 1 8 8M9 1 1 9" stroke="#111" strokeWidth="1.600" /></svg></button>
          </PanelHead>
          <PanelTools>
            <Tools items={[["treeIcon", "Последовательность"], ["structure", "Состав"], "v", "|", ["docs*", "Дополнительное окно"], ["relations", "Отношения"]]} />
          </PanelTools>
          <PanelBody>
            <TreeBox>
              <Tree>
                <RootRow><Icon name="partGold" />Кронштейн (Тел-1)</RootRow>
                <Branch $expandable>
                  <Expander aria-label="Развернуть начало координат" />
                  <Icon name="origin" /><span>(т)Начало координат</span>
                </Branch>
                {tree.map(([icon, label], i) => (
                  <Branch key={i} $selected={label === "(-) Эскиз:7"}><Icon name={icon} /><span>{label}</span></Branch>
                ))}
              </Tree>
              <ScrollV>
                <ScrollArrow $dir="up" aria-label="Вверх" />
                <Track $column><Thumb $column $share={73} /></Track>
                <ScrollArrow $dir="down" aria-label="Вниз" />
              </ScrollV>
              <ScrollH>
                <ScrollArrow $dir="left" aria-label="Влево" />
                <Track><Thumb $share={62} /></Track>
                <ScrollArrow $dir="right" aria-label="Вправо" />
              </ScrollH>
            </TreeBox>
            <LowerBox />
          </PanelBody>
          <Tabs role="tablist">
            <Tab $on role="tab" aria-selected="true">Построение</Tab>
            <Tab role="tab" aria-selected="false">Исполнения</Tab>
            <Tab role="tab" aria-selected="false">Зоны</Tab>
          </Tabs>
        </Panel>

        <ViewPort aria-label="Окно модели"><Model /></ViewPort>
      </Workspace>

      <PropertyArea>
        <PropertyGrip />
        <PropertyBox />
      </PropertyArea>
      <StatusBar>
        <p>Щелкните левой кнопкой мыши на объекте для его выделения (вместе с Ctrl - добавить к выделенным)</p>
        <StatusCell $w={86} />
        <StatusCell $w={17}>
          <svg width="12" height="12"><path d="M9 1h2v2H9ZM9 5h2v2H9ZM5 5h2v2H5ZM9 9h2v2H9ZM5 9h2v2H5ZM1 9h2v2H1Z" fill="#9496ac" /></svg>
        </StatusCell>
      </StatusBar>
    </Frame>
  );
}
